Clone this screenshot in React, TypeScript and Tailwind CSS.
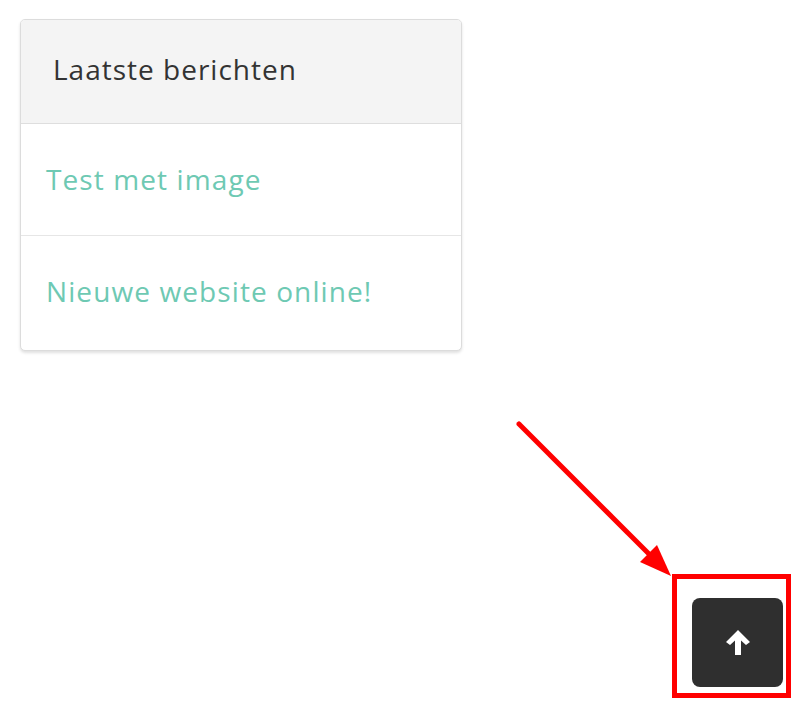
import React from "react";

export default function App() {
  return (
    <div className="relative w-[800px] h-[702px] bg-white overflow-hidden" style={{ fontFamily: "'Open Sans', Lato, sans-serif" }}>
      <div className="pt-[19px] pl-[20px]">
        <div className="w-[442px] border border-[#dcdcdc] rounded-[5px] bg-white shadow-[0_2px_3px_rgba(0,0,0,0.12)] overflow-hidden">
          <div className="h-[104px] bg-[#f4f4f4] border-b border-[#dedede] flex items-center pl-[32px] pb-[5px]">
            <span className="text-[28px] text-[#333333] tracking-[1px]">Laatste berichten</span>
          </div>
          <div className="h-[112px] border-b border-[#e6e6e6] flex items-center pl-[25px] pb-[2px]">
            <span className="text-[28px] text-[#6ec9b3] tracking-[1.1px]">Test met image</span>
          </div>
          <div className="h-[114px] flex items-center pl-[25px] pb-[4px]">
            <span className="text-[28px] text-[#6ec9b3] tracking-[1.1px]">Nieuwe website online!</span>
          </div>
        </div>
      </div>

      <svg className="absolute left-0 top-0" width="800" height="702">
        <line x1="519" y1="424" x2="655" y2="560" stroke="#ff0000" strokeWidth="5" strokeLinecap="round" />
        <polygon points="671,576 640,562 657,545" fill="#ff0000" />
      </svg>

      <div className="absolute left-[672px] top-[574px] w-[119px] h-[124px] border-[5px] border-[#ff0000]" />

      <div className="absolute left-[692px] top-[598px] w-[91px] h-[89px] rounded-[8px] bg-[#2f2f2f] flex items-center justify-center">
        <svg width="26" height="27" viewBox="0 0 26 27">
          <polygon points="13,1 25,13 21,16 16,11.5 16,26 10,26 10,11.5 5,16 1,13" fill="#ffffff" />
        </svg>
      </div>
    </div>
  );
}
